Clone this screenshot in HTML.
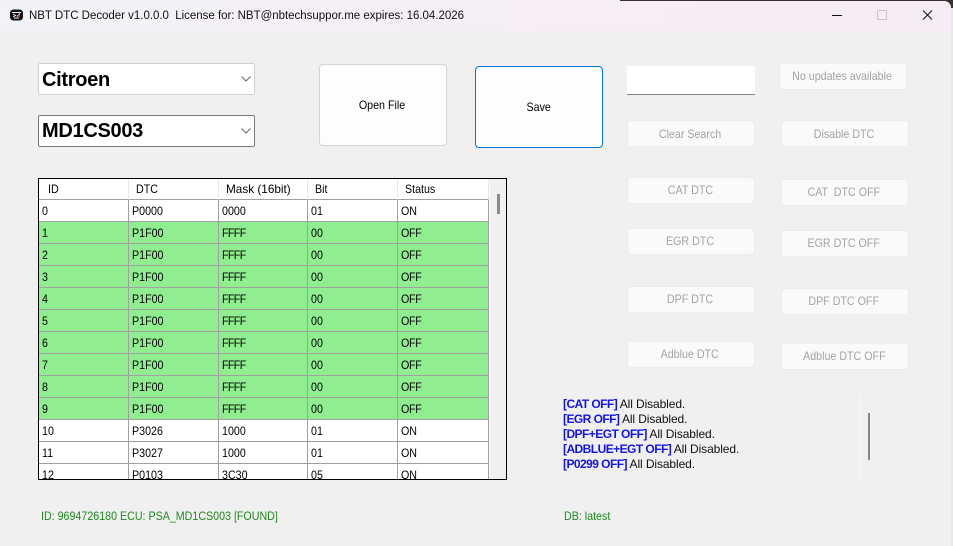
<!DOCTYPE html>
<html><head><meta charset="utf-8"><style>
html,body{margin:0;padding:0;background:#e8e8e8}
body{position:relative;width:953px;height:546px;overflow:hidden;font-family:"Liberation Sans",sans-serif;font-size:12px;color:#000}
#top{position:absolute;left:0;top:0;width:953px;height:8px;background:linear-gradient(90deg,#f2f2f2 0,#f2f2f2 620px,#333 620px,#333 953px)}
#win{position:absolute;left:0;top:1px;width:951px;height:545px;background:#f0f0f0;border-radius:7px 7px 0 0;overflow:hidden}
#tb{position:absolute;left:0;top:0;width:953px;height:30px;background:linear-gradient(90deg,#f3f2f8,#f7edf6 60%,#f7ecf6)}
.a{position:absolute;white-space:nowrap}
i{font-style:normal;display:inline-block;transform:scaleX(.89);transform-origin:0 50%;white-space:pre}
.btn i{transform-origin:50% 50%}
.cb{position:absolute;box-sizing:border-box;background:#fff;border:1px solid #d0d0d0;border-radius:2px;font-weight:bold;font-size:20px;line-height:30px;padding-left:3px;color:#000;letter-spacing:-.3px}
.btn{position:absolute;box-sizing:border-box;border-radius:4px;background:#fdfdfd;border:1px solid #d4d4d4;text-align:center;font-size:12px}
.d{background:#fafafa;border:1px solid #ececec;color:#a3a3a8;height:27px;line-height:25px;width:128px;padding-right:2px}
#tbl{position:absolute;left:38px;top:177px;width:469px;height:302px;box-sizing:border-box;border:1px solid #000;background:#f0f0f0;overflow:hidden}
.hd,.c{position:absolute;box-sizing:border-box;white-space:nowrap;height:22px;font-size:12px}
.hd{background:#fff;height:21px;line-height:21px;top:0;border-right:1px solid #e8e8e8;border-bottom:1px solid #a0a0a0;padding-left:7px}
.c{border-right:1px solid #a0a0a0;border-bottom:1px solid #a0a0a0;padding-left:3px;background:#fff;line-height:23px}
.g{background:#90ee90}
.f i{letter-spacing:-.7px}
.o i{letter-spacing:-.3px}
.log{left:563px;line-height:15px;height:15px;font-size:12px;letter-spacing:-.1px;color:#111}
.log b{color:#1414e6;letter-spacing:-.55px}
.grn{color:#1f8a1f;font-size:12px}
.c1{left:0;width:90px}.c2{left:90px;width:90px}.c3{left:180px;width:89px}.c4{left:269px;width:90px}.c5{left:359px;width:91px}
</style></head><body>
<div id="top"></div>
<div id="win">
<div id="tb"></div>
<svg class="a" style="left:10px;top:8px" width="13" height="12" viewBox="0 0 13 12"><rect x="0" y="0.5" width="13" height="11" rx="3.5" fill="#111"/><path d="M2 3.5h9M3 5l2.5 1.5L3 8M10 4.5L7 7.5M4 9h5" stroke="#eee" stroke-width="1" fill="none"/><circle cx="9" cy="7" r="1" fill="#c33"/></svg>
<div class="a" style="left:29px;top:7px;font-size:11.5px;line-height:16px;color:#111;letter-spacing:-.02px;white-space:pre">NBT DTC Decoder v1.0.0.0  License for: NBT@nbtechsuppor.me expires: 16.04.2026</div>
<svg class="a" style="left:830px;top:7px" width="115" height="14" viewBox="0 0 115 14"><path d="M2 7.5h10" stroke="#111" stroke-width="1"/><rect x="47.5" y="2.5" width="9" height="9" rx="1" fill="none" stroke="#c4c4c4"/><path d="M93 2.5l9 9M102 2.5l-9 9" stroke="#111" stroke-width="1"/></svg>

<div class="cb" style="left:38px;top:62px;width:217px;height:32px;line-height:32px">Citroen</div>
<div class="cb" style="left:38px;top:114px;width:217px;height:32px;border-color:#7a7a7a;padding-left:3px">MD1CS003</div>
<svg class="a" style="left:240px;top:74px" width="12" height="8" viewBox="0 0 12 8"><path d="M1.5 1.5l4.5 4.5 4.5-4.5" fill="none" stroke="#666"/></svg>
<svg class="a" style="left:240px;top:126px" width="12" height="8" viewBox="0 0 12 8"><path d="M1.5 1.5l4.5 4.5 4.5-4.5" fill="none" stroke="#666"/></svg>

<div class="btn" style="left:319px;top:63px;width:128px;height:82px;line-height:80px;padding-right:1px"><i>Open File</i></div>
<div class="btn" style="left:475px;top:65px;width:128px;height:82px;line-height:80px;border-color:#0078d4;padding-right:1px"><i>Save</i></div>
<div class="a" style="left:627px;top:65px;width:128px;height:29px;background:#fff;border-bottom:1px solid #838383;box-sizing:border-box"></div>

<div class="btn d" style="left:779px;top:62px"><i>No updates available</i></div>
<div class="btn d" style="left:627px;top:119px;line-height:27px"><i>Clear Search</i></div>
<div class="btn d" style="left:781px;top:119px;line-height:27px"><i>Disable DTC</i></div>
<div class="btn d" style="left:627px;top:176px"><i>CAT DTC</i></div>
<div class="btn d" style="left:781px;top:178px"><i>CAT  DTC OFF</i></div>
<div class="btn d" style="left:627px;top:227px"><i>EGR DTC</i></div>
<div class="btn d" style="left:781px;top:229px"><i>EGR DTC OFF</i></div>
<div class="btn d" style="left:627px;top:285px"><i>DPF DTC</i></div>
<div class="btn d" style="left:781px;top:287px"><i>DPF DTC OFF</i></div>
<div class="btn d" style="left:627px;top:340px"><i>Adblue DTC</i></div>
<div class="btn d" style="left:781px;top:342px"><i>Adblue DTC OFF</i></div>

<div id="tbl">
<div class="hd c1" style="padding-left:9px"><i>ID</i></div>
<div class="hd c2" style="padding-left:7px"><i>DTC</i></div>
<div class="hd c3"><i style="transform:scaleX(.98)">Mask (16bit)</i></div>
<div class="hd c4"><i>Bit</i></div>
<div class="hd c5"><i>Status</i></div>
<div class="c c1" style="top:21px"><i>0</i></div><div class="c c2" style="top:21px"><i>P0000</i></div><div class="c c3" style="top:21px"><i>0000</i></div><div class="c c4" style="top:21px"><i>01</i></div><div class="c c5" style="top:21px"><i>ON</i></div>
<div class="c g c1" style="top:43px"><i>1</i></div><div class="c g c2" style="top:43px"><i>P1F00</i></div><div class="c g c3 f" style="top:43px"><i>FFFF</i></div><div class="c g c4" style="top:43px"><i>00</i></div><div class="c g c5 o" style="top:43px"><i>OFF</i></div>
<div class="c g c1" style="top:65px"><i>2</i></div><div class="c g c2" style="top:65px"><i>P1F00</i></div><div class="c g c3 f" style="top:65px"><i>FFFF</i></div><div class="c g c4" style="top:65px"><i>00</i></div><div class="c g c5 o" style="top:65px"><i>OFF</i></div>
<div class="c g c1" style="top:87px"><i>3</i></div><div class="c g c2" style="top:87px"><i>P1F00</i></div><div class="c g c3 f" style="top:87px"><i>FFFF</i></div><div class="c g c4" style="top:87px"><i>00</i></div><div class="c g c5 o" style="top:87px"><i>OFF</i></div>
<div class="c g c1" style="top:109px"><i>4</i></div><div class="c g c2" style="top:109px"><i>P1F00</i></div><div class="c g c3 f" style="top:109px"><i>FFFF</i></div><div class="c g c4" style="top:109px"><i>00</i></div><div class="c g c5 o" style="top:109px"><i>OFF</i></div>
<div class="c g c1" style="top:131px"><i>5</i></div><div class="c g c2" style="top:131px"><i>P1F00</i></div><div class="c g c3 f" style="top:131px"><i>FFFF</i></div><div class="c g c4" style="top:131px"><i>00</i></div><div class="c g c5 o" style="top:131px"><i>OFF</i></div>
<div class="c g c1" style="top:153px"><i>6</i></div><div class="c g c2" style="top:153px"><i>P1F00</i></div><div class="c g c3 f" style="top:153px"><i>FFFF</i></div><div class="c g c4" style="top:153px"><i>00</i></div><div class="c g c5 o" style="top:153px"><i>OFF</i></div>
<div class="c g c1" style="top:175px"><i>7</i></div><div class="c g c2" style="top:175px"><i>P1F00</i></div><div class="c g c3 f" style="top:175px"><i>FFFF</i></div><div class="c g c4" style="top:175px"><i>00</i></div><div class="c g c5 o" style="top:175px"><i>OFF</i></div>
<div class="c g c1" style="top:197px"><i>8</i></div><div class="c g c2" style="top:197px"><i>P1F00</i></div><div class="c g c3 f" style="top:197px"><i>FFFF</i></div><div class="c g c4" style="top:197px"><i>00</i></div><div class="c g c5 o" style="top:197px"><i>OFF</i></div>
<div class="c g c1" style="top:219px"><i>9</i></div><div class="c g c2" style="top:219px"><i>P1F00</i></div><div class="c g c3 f" style="top:219px"><i>FFFF</i></div><div class="c g c4" style="top:219px"><i>00</i></div><div class="c g c5 o" style="top:219px"><i>OFF</i></div>
<div class="c c1" style="top:241px"><i>10</i></div><div class="c c2" style="top:241px"><i>P3026</i></div><div class="c c3" style="top:241px"><i>1000</i></div><div class="c c4" style="top:241px"><i>01</i></div><div class="c c5" style="top:241px"><i>ON</i></div>
<div class="c c1" style="top:263px"><i>11</i></div><div class="c c2" style="top:263px"><i>P3027</i></div><div class="c c3" style="top:263px"><i>1000</i></div><div class="c c4" style="top:263px"><i>01</i></div><div class="c c5" style="top:263px"><i>ON</i></div>
<div class="c c1" style="top:285px"><i>12</i></div><div class="c c2" style="top:285px"><i>P0103</i></div><div class="c c3" style="top:285px"><i>3C30</i></div><div class="c c4" style="top:285px"><i>05</i></div><div class="c c5" style="top:285px"><i>ON</i></div>
<div class="a" style="left:450px;top:0;width:1px;height:300px;background:#fafafa"></div>
<div class="a" style="left:458px;top:15px;width:3px;height:20px;background:#8a8a8a"></div>
</div>

<div class="a log" style="top:396px"><b>[CAT OFF]</b> All Disabled.</div>
<div class="a log" style="top:411px"><b>[EGR OFF]</b> All Disabled.</div>
<div class="a log" style="top:426px"><b>[DPF+EGT OFF]</b> All Disabled.</div>
<div class="a log" style="top:441px"><b>[ADBLUE+EGT OFF]</b> All Disabled.</div>
<div class="a log" style="top:456px"><b>[P0299 OFF]</b> All Disabled.</div>
<div class="a" style="left:860px;top:395px;width:1px;height:84px;background:#fafafa"></div>
<div class="a" style="left:868px;top:412px;width:2px;height:47px;background:#858585"></div>

<div class="a grn" style="left:41px;top:507px;line-height:16px"><i>ID: 9694726180 ECU: PSA_MD1CS003 [FOUND]</i></div>
<div class="a grn" style="left:564px;top:507px;line-height:16px"><i>DB: latest</i></div>
</div>
</body></html>
